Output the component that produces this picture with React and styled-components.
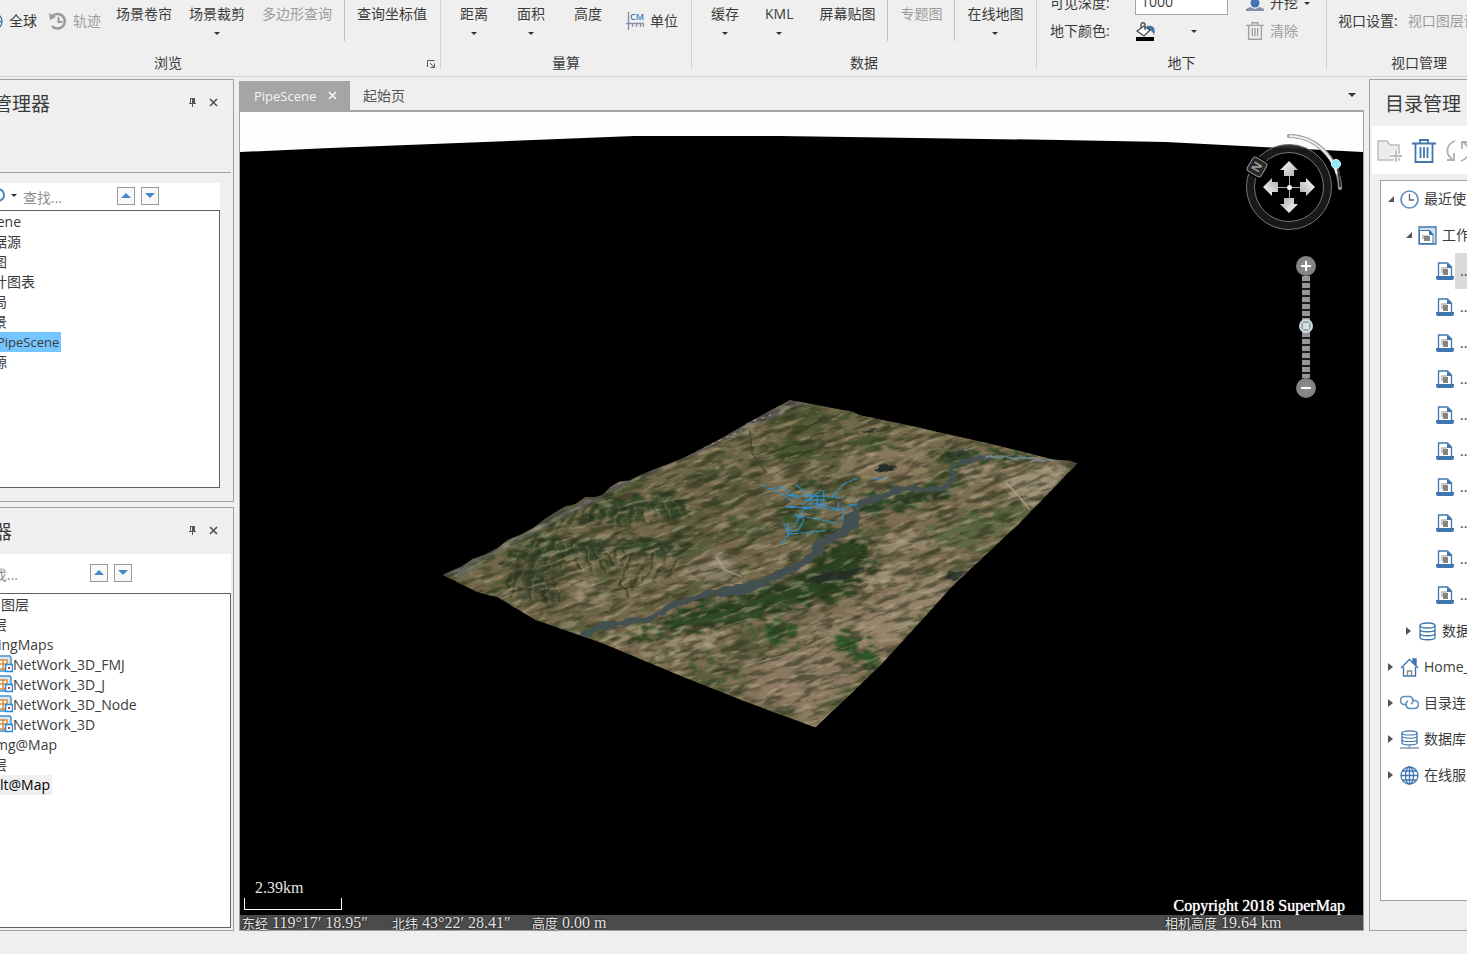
import React from 'react'
import styled, { createGlobalStyle } from 'styled-components'

const GlobalStyle = createGlobalStyle`
  * {
    box-sizing: border-box;
  }
  body {
    margin: 0;
    overflow: hidden;
    background: #efefef;
    color: #3b3b3b;
    font-family: 'Open Sans', 'Noto Sans CJK SC', sans-serif;
    font-size: 14px;
    line-height: 20px;
  }
  button, input {
    font: inherit;
    color: inherit;
    border: 0;
    padding: 0;
    background: none;
  }
  button {
    white-space: nowrap;
  }
  svg {
    display: block;
    flex: none;
  }
`

const Shell = styled.div`
  display: flex;
  flex-direction: column;
  height: 100vh;
  overflow: hidden;
`

/* ---------- ribbon ---------- */

const RibbonBar = styled.header`
  display: flex;
  flex: none;
  height: 77px;
  margin-left: -104px;
  border-bottom: 1px solid #d2d2d2;
`
const Group = styled.section`
  position: relative;
  display: flex;
  flex-direction: column;
  flex: ${p => (p.$width ? `0 0 ${p.$width}px` : '1 0 0')};
  height: 69px;
  border-right: ${p => (p.$width ? '1px solid #d2d2d2' : '0')};
`
const GroupBody = styled.div`
  display: flex;
  flex: none;
  justify-content: ${p => p.$justify || 'flex-start'};
  gap: ${p => p.$gap || 0}px;
  height: 53px;
  padding: 0 ${p => p.$right || 0}px 0 ${p => p.$left || 0}px;
`
const GroupLabel = styled.div`
  text-align: center;
  line-height: 20px;
`
const Launcher = styled.button`
  position: absolute;
  right: 4px;
  bottom: 0;
  width: 9px;
  height: 10px;
`
const BigButton = styled.button`
  display: flex;
  flex-direction: column;
  align-items: center;
  gap: 8px;
  height: 41px;
  padding-top: 4px;
  color: ${p => (p.disabled ? '#9d9d9d' : 'inherit')};
`
const SmallButton = styled.button`
  display: flex;
  align-items: center;
  gap: 6px;
  height: ${p => p.$height || 42}px;
  color: ${p => (p.disabled ? '#9d9d9d' : 'inherit')};
`
const Divider = styled.i`
  width: 1px;
  height: 41px;
  margin: 0 12px;
  background: #c0c0c0;
`
const Caret = styled.i`
  width: 0;
  height: 0;
  border: solid transparent;
  border-width: ${p => p.$size || 3}px ${p => p.$size || 3}px 0;
  border-top-color: #333;
`
const UndergroundForm = styled.div`
  display: grid;
  grid-template-columns: 85px 111px auto;
  grid-auto-rows: 28px;
  align-items: center;
  justify-content: start;
  height: 56px;
  margin-top: -11px;
  padding-left: 13px;
`
const DepthInput = styled.input`
  width: 93px;
  height: 24px;
  padding: 0 5px 4px;
  border: 1px solid #a6a6a6;
  background: #fff;
`
const ColorButton = styled.button`
  display: flex;
  align-items: center;
  justify-content: space-between;
  width: 62px;
  height: 24px;
`
const ViewportRow = styled.div`
  display: flex;
  flex: none;
  gap: 10px;
  padding-left: 11px;
  line-height: 42px;
  white-space: nowrap;
  overflow: hidden;
  height: 53px;

  span {
    color: #9d9d9d;
  }
`
const ViewportLabel = styled(GroupLabel)`
  padding-left: 64px;
  text-align: left;
`

/* ---------- work area ---------- */

const Workspace = styled.main`
  flex: 1;
  min-height: 0;
  display: grid;
  grid-template-columns: 294px minmax(0, 1fr) 98px;
  gap: 5px;
  margin-left: -60px;
  padding-top: 2px;
`
const LeftColumn = styled.aside`
  display: grid;
  grid-template-rows: 423fr 424fr;
  gap: 5px;
  min-height: 0;
`
const Panel = styled.section`
  display: flex;
  flex-direction: column;
  min-height: 0;
  min-width: 0;
  overflow: hidden;
  border: 1px solid #a0a0a0;
`
const PanelHead = styled.div`
  display: flex;
  align-items: center;
  flex: none;
  height: 46px;
  padding: 2px 15px 0 ${p => p.$left}px;

  h2 {
    flex: 1;
    margin: 0;
    font-size: 19px;
    line-height: 28px;
    font-weight: 400;
    white-space: nowrap;
  }
`
const HeadButton = styled.button`
  display: grid;
  place-items: center;
  width: 10px;
  height: 10px;
  margin: 0 0 4px 11px;
`
const PanelGap = styled.div`
  flex: none;
  height: 47px;
  margin-right: 2px;
  border-bottom: 1px solid #a0a0a0;
`
const SearchBar = styled.div`
  display: flex;
  align-items: center;
  flex: none;
  gap: 6px;
  height: ${p => p.$height}px;
  margin: ${p => p.$top}px ${p => p.$side}px 0 0;
  padding: 0 0 2px ${p => p.$left}px;
  background: #fff;

  input {
    width: ${p => p.$field}px;
    height: 20px;
    margin-top: 4px;
    outline: 0;
  }
  input::placeholder {
    color: #8f8f8f;
    opacity: 1;
  }
`
const FindButton = styled.button`
  display: grid;
  place-items: center;
  width: 18px;
  height: 18px;
  border: 1px solid #9a9a9a;
  background: #f8f8f8;
`
const TreeBox = styled.ul`
  flex: 1;
  min-height: 0;
  margin: 0 ${p => p.$side}px ${p => p.$bottom}px 0;
  padding: 1px 0 0;
  list-style: none;
  border: 1px solid #606060;
  border-left: 0;
  background: #fff;
`
const TreeRow = styled.li`
  display: flex;
  height: 20px;
  padding-left: ${p => 60 + p.$start}px;
  white-space: nowrap;

  span {
    padding-right: 2px;
    font-size: ${p => (p.$scene ? 13 : 14)}px;
    background: ${p => p.$mark || 'transparent'};
    color: ${p => (p.$strong ? '#000' : 'inherit')};
  }
`

/* ---------- scene ---------- */

const Viewer = styled.section`
  display: flex;
  flex-direction: column;
  min-width: 0;
  min-height: 0;
`
const TabStrip = styled.div`
  display: flex;
  align-items: center;
  flex: none;
  height: 33px;
  padding: 2px 6px 2px 0;
  border-bottom: 2px solid #a5a5a5;
`
const Tab = styled.button`
  display: flex;
  align-items: center;
  justify-content: space-between;
  align-self: stretch;
  width: ${p => (p.$active ? '111px' : 'auto')};
  margin-bottom: -2px;
  padding: 0 13px 0 ${p => (p.$active ? 15 : 13)}px;
  font-size: ${p => (p.$active ? 13 : 14)}px;
  background: ${p => (p.$active ? '#a5a5a5' : 'none')};
  color: ${p => (p.$active ? '#f4f4f4' : '#555')};
`
const TabMenu = styled.button`
  display: grid;
  place-items: center;
  width: 12px;
  height: 12px;
  margin-left: auto;
`
const Canvas = styled.div`
  position: relative;
  flex: 1;
  min-height: 0;
  display: flex;
  flex-direction: column;
  border: 1px solid #a0a0a0;
  border-top: 0;
  background: #000;
`
const Scene = styled.svg`
  flex: 1;
  width: 100%;
  min-height: 0;
`
const Compass = styled.svg`
  position: absolute;
  top: 18px;
  right: 13px;
`
const ZoomBar = styled.div`
  position: absolute;
  top: 144px;
  right: 47px;
  display: flex;
  flex-direction: column;
  align-items: center;
  width: 20px;
`
const ZoomButton = styled.button`
  display: grid;
  place-items: center;
  width: 20px;
  height: 20px;
  border-radius: 50%;
  background: radial-gradient(#8f8f8f, #7b7b7b);
`
const ZoomRange = styled.input`
  appearance: none;
  writing-mode: vertical-lr;
  direction: rtl;
  width: 14px;
  height: 102px;
  margin: 0;
  background: repeating-linear-gradient(#969696 0 5px, #1c1c1c 5px 7px) center / 8px 100% no-repeat;

  &::-webkit-slider-thumb {
    appearance: none;
    width: 14px;
    height: 14px;
    border: 2px solid #cfdadd;
    border-radius: 50%;
    background: linear-gradient(#d3dfe2, #d3dfe2) center / 6px 6px no-repeat #94a5ab;
  }
`
const ScaleBar = styled.div`
  position: absolute;
  left: 4px;
  bottom: 20px;
  width: 98px;
  height: 30px;
  padding-left: 11px;
  color: #e6e6e6;
  font: 16px/16px 'Liberation Serif', 'Noto Sans CJK SC', serif;

  &::after {
    content: '';
    position: absolute;
    left: 0;
    right: 0;
    bottom: 0;
    height: 11px;
    border: 1px solid #fff;
    border-top: 0;
  }
`
const Copyright = styled.div`
  position: absolute;
  right: 18px;
  bottom: 14px;
  color: #fff;
  font: 16px/20px 'Liberation Serif', serif;
  text-shadow: 0 0 1px #fff;
`
const CoordBar = styled.div`
  display: grid;
  grid-template-columns: 150px 140px 1fr 198px;
  flex: none;
  height: 15px;
  padding-left: 2px;
  background: #4b4b4b;
  color: #e2e2e2;
  font: 16px/15px 'Liberation Serif', 'Noto Sans CJK SC', serif;
  text-shadow: 0 0 2px #000;
  white-space: pre;

  b {
    font-weight: 400;
    font-size: 13px;
  }
`

/* ---------- catalog ---------- */

const CatalogPanel = styled(Panel)`
  border-right: 0;
`
const CatalogTools = styled.div`
  display: flex;
  align-items: center;
  flex: none;
  gap: 10px;
  height: 48px;
  margin-left: 2px;
  padding: 2px 0 0 5px;
  background: #fff;
`
const CatalogTree = styled.ul`
  flex: 1;
  min-height: 0;
  margin: 6px 0 29px 10px;
  padding: 0;
  list-style: none;
  overflow: hidden;
  border: 1px solid #a0a0a0;
  border-right: 0;
  background: #fff;
`
const CatalogRow = styled.li`
  display: flex;
  align-items: center;
  height: 36px;
  padding-left: ${p => 7 + p.$depth * 18}px;
  white-space: nowrap;

  span {
    align-self: stretch;
    flex: 1 0 auto;
    padding-left: 5px;
    line-height: 36px;
    background: ${p => (p.$selected ? '#dadada' : 'none')};
  }
`
const Twisty = styled.i`
  flex: none;
  width: 12px;
  display: flex;
  visibility: ${p => (p.$leaf ? 'hidden' : 'visible')};

  &::before {
    content: '';
    border-style: solid;
    border-width: ${p => (p.$open ? '0 0 6px 6px' : '4px 0 4px 5px')};
    border-color: ${p => (p.$open ? 'transparent transparent #555' : 'transparent transparent transparent #555')};
  }
`
const StatusBar = styled.footer`
  flex: none;
  height: 23px;
`

/* ---------- icons ---------- */

const blue = '#3f76b0'

const CloseIcon = ({ color = '#555' }) => (
  <svg width="9" height="9" viewBox="0 0 9 9">
    <path d="M1 1l7 7M8 1L1 8" stroke={color} strokeWidth="1.7" />
  </svg>
)

const PinIcon = () => (
  <svg width="7" height="9" viewBox="0 0 7 9">
    <path d="M1 0h5v5h1v1H4v3H3V6H0V5h1z" fill="#555" />
    <path d="M2 1h1v4H2z" fill="#efefef" />
  </svg>
)

const LauncherIcon = () => (
  <svg width="8" height="8" viewBox="0 0 8 8" fill="none" stroke="#555">
    <path d="M.5 7V.5H7.500" />
    <path d="M3 3l4 4M7.500 3.500v4h-4" />
  </svg>
)

const HistoryIcon = () => (
  <svg width="18" height="18" viewBox="0 0 18 18" fill="none" stroke="#9a9a9a">
    <path d="M3 4.500A7.300 7.300 0 1 1 3 14" strokeWidth="2.600" />
    <path d="M0 1l1 7 6-3z" fill="#9a9a9a" stroke="none" />
    <path d="M9.500 5v5h4" strokeWidth="2" />
  </svg>
)

const GlobeIcon = () => (
  <svg width="19" height="19" viewBox="0 0 19 19" fill="none" stroke={blue} strokeWidth="1.300">
    <circle cx="9.500" cy="9.500" r="8.500" />
    <ellipse cx="9.500" cy="9.500" rx="4" ry="8.500" />
    <path d="M9.500 1v17M1 9.500h17M2.500 5h14M2.500 14h14" />
  </svg>
)

const UnitIcon = () => (
  <svg width="18" height="18" viewBox="0 0 18 18">
    <path d="M2.500 0v18M0 11.500h18M6.500 11v4M10.500 11v4M14.500 11v4M17.500 11v4" stroke="#8590a5" strokeWidth="1.300" />
    <text x="4" y="8" fontSize="9" fontWeight="600" fill={blue}>CM</text>
  </svg>
)

const BucketIcon = () => (
  <svg width="20" height="19" viewBox="0 0 20 19">
    <path d="M12 4c7-1 9 3 7 9-1-3-3-5-7-6z" fill={blue} />
    <path d="M9 4L2 9l7 5 6-6z" fill="#fff" stroke="#444" strokeWidth="1.200" />
    <path d="M6 6V3c0-3 4-3 4 0v5" fill="none" stroke="#555" strokeWidth="1.400" />
    <path d="M1 15h18v4H1z" fill="#000" />
  </svg>
)

const DigIcon = () => (
  <svg width="18" height="18" viewBox="0 0 18 18">
    <circle cx="9" cy="9" r="4.500" fill={blue} />
    <path d="M0 17v-2l4-2 5 2 5-2 4 2v2z" fill="#8590a5" />
  </svg>
)

const TrashIcon = ({ color, size = 18 }) => (
  <svg width={size} height={size} viewBox="0 0 24 24" fill="none" stroke={color} strokeWidth="1.800">
    <path d="M0 4.500h24M8 4V1h8v3M3.500 5v18h17V5M8.500 8v11M12 8v11M15.500 8v11" />
  </svg>
)

const FolderAddIcon = () => (
  <svg width="25" height="24" viewBox="0 0 25 24" fill="none" stroke="#bcbcbc">
    <path d="M1 2h9l3 4h9v15H1z" fill="#ececec" strokeWidth="1.500" />
    <path d="M19 11v12M13 17h12" stroke="#fff" strokeWidth="4" />
    <path d="M19 11v12M13 17h12" strokeWidth="1.800" />
  </svg>
)

const RefreshIcon = () => (
  <svg width="24" height="24" viewBox="0 0 24 24" fill="none" stroke="#b0b0b0" strokeWidth="1.800">
    <path d="M9 2C0 5-1 15 6 20M1 21h7v-7M15 22c9-3 10-13 3-18M23 3h-7v7" />
  </svg>
)

const ClockIcon = () => (
  <svg width="19" height="19" viewBox="0 0 19 19" fill="none">
    <circle cx="9.500" cy="9.500" r="8.500" stroke="#5f8fbf" strokeWidth="1.700" />
    <path d="M9.500 4v6h4.500" stroke="#666" strokeWidth="1.300" />
  </svg>
)

const WorkspaceIcon = () => (
  <svg width="19" height="19" viewBox="0 0 19 19" fill="none" stroke={blue}>
    <path d="M1 1h17v17H1z" fill="#d3e0ee" strokeWidth="1.300" />
    <path d="M1.500 4.500h10.500l3 4v9H1.500z" fill="#fff" />
    <path d="M11.500 4.500v4h3.500z" fill={blue} />
    <path d="M4 9h7v4H4z" fill="#c4c4c4" stroke="none" />
    <path d="M6 10h6v5H6z" fill="#858585" stroke="none" />
  </svg>
)

const FileIcon = () => (
  <svg width="19" height="19" viewBox="0 0 19 19">
    <path d="M2.500 1h9l4 4v10h-13z" fill="#fff" stroke={blue} strokeWidth="1.300" />
    <path d="M11 1v5h5z" fill={blue} />
    <path d="M5 5h6v6H5z" fill="#c8c8c8" />
    <path d="M7 7h5v6H7z" fill="#858585" />
    <path d="M0 14h18v2l-1 2H1l-1-2z" fill={blue} />
  </svg>
)

const DatabaseIcon = ({ served }) => (
  <svg width="19" height="19" viewBox="0 0 19 19" fill="none" stroke={blue} strokeWidth="1.300">
    <g transform={served ? 'scale(1 .84)' : undefined}>
      <ellipse cx="9.500" cy="3.500" rx="7.500" ry="2.500" />
      <path d="M2 3.500v12c0 3 15 3 15 0v-12M2 7.500c0 3 15 3 15 0M2 11.500c0 3 15 3 15 0" />
    </g>
    {served && <path d="M0 18h19M9.500 15v3" stroke="#8d99ab" strokeWidth="1.500" />}
  </svg>
)

const HomeIcon = () => (
  <svg width="19" height="19" viewBox="0 0 19 19" fill="none" stroke={blue} strokeWidth="1.400">
    <path d="M1 10l8.500-8.500L18 10M3.500 9v9h12V9" />
    <path d="M13 1h3v6l-3-3z" fill={blue} />
    <path d="M7.500 18v-5h4v5" stroke="#888" />
  </svg>
)

const LinkIcon = () => (
  <svg width="19" height="19" viewBox="0 0 19 19" fill="none" stroke="#5f8fbf" strokeWidth="1.600">
    <path d="M7 10.500H4.500a3.700 3.700 0 0 1 0-8H9a4 4 0 0 1 2 7.500" />
    <path d="M12 6.500h2.500a3.700 3.700 0 0 1 0 8H10a4 4 0 0 1-2-7.500" />
  </svg>
)

const LayerIcon = () => (
  <svg width="18" height="18" viewBox="0 0 18 18">
    <path d="M1 1h14l1 2v13H1z" fill="#d6e8f7" stroke="#4a90c8" strokeWidth="1.500" />
    <path d="M3 5h9v9H3zM3 9h9M8 5v9" fill="#fff" stroke="#e08a35" strokeWidth="1.500" />
    <path d="M10.500 9.500h7v7h-7z" fill="#fff" stroke="#1e8ae0" strokeWidth="1.500" />
    <path d="M13 12h2v2h-2z" fill="#c33" />
  </svg>
)

const UpDown = () => (
  <>
    <FindButton aria-label="上一个">
      <svg width="10" height="5" viewBox="0 0 10 5"><path d="M0 5l5-5 5 5z" fill="#4486c6" /></svg>
    </FindButton>
    <FindButton aria-label="下一个">
      <svg width="10" height="5" viewBox="0 0 10 5"><path d="M0 0l5 5 5-5z" fill="#4486c6" /></svg>
    </FindButton>
  </>
)

/* ---------- terrain ---------- */

const outline =
  'M30 555L75 530L100 508L130 495L160 475L185 450L215 435L245 415L275 385L295 370L320 350L345 342L370 320L390 322L410 315L430 290L450 275L475 272L500 255L530 240L600 205L640 180L700 140L760 95L855 30L1005 65L1020 75L1135 105L1345 165L1480 208L1520 212L1538 220L1400 400L1240 590L1075 820L916 1013L750 935L600 860L400 755L250 690L185 640L160 622L110 605Z'

const fields = [
  ['#34462a', 'M340 370L420 320L560 310L620 345L590 375L520 360L480 385L380 395Z'],
  ['#36482b', 'M200 470L270 430L400 445L560 440L640 470L560 490L470 475L380 505L320 490L250 520L180 500Z'],
  ['#38432f', 'M180 540L260 520L300 570L280 640L210 600Z'],
  ['#4a5133', 'M600 250L740 230L800 260L700 275L590 270Z'],
  ['#46522f', 'M760 170L860 140L930 150L900 200L800 210Z'],
  ['#42532c', 'M960 130L1060 130L1120 165L1020 175Z'],
  ['#4b5431', 'M760 70L880 45L1000 75L960 110L820 105Z'],
  ['#2b4826', 'M1200 200L1290 175L1450 200L1410 212L1300 205L1220 220Z'],
  ['#2f4a27', 'M870 280L950 275L945 320L880 310Z'],
  ['#394f2d', 'M820 350L890 345L960 420L860 430Z'],
  ['#2a4526', 'M1010 330L1100 300L1240 270L1250 305L1100 350L1020 370Z'],
  ['#25401e', 'M930 460L1030 430L1040 510L1000 600L890 640L780 620L870 560L910 500Z'],
  ['#2b4625', 'M600 650L760 590L860 570L920 610L760 690L580 720L430 770L480 730L560 690Z'],
  ['#5e6843', 'M1190 400L1320 370L1440 340L1370 420L1260 480L1180 450Z'],
  ['#50603a', 'M1250 370L1420 365L1400 385L1280 390Z'],
  ['#265024', 'M950 725L1010 735L1030 770L1070 810L1040 850L1000 790L940 750Z'],
  ['#2f5528', 'M780 700L860 690L870 730L820 760L770 730Z'],
  ['#3a572f', 'M670 880L720 865L735 880L690 897Z'],
  ['#455a35', 'M640 800L700 770L690 810L640 860Z'],
  ['#4c5a38', 'M700 390L800 380L800 420L720 425Z']
]

const barren = [
  ['#a3947a', 'M330 560L400 570L430 630L360 610Z'],
  ['#a59678', 'M380 745L500 698L560 700L470 740L400 765Z'],
  ['#a39478', 'M500 790L620 730L720 710L640 760L520 810Z'],
  ['#a59678', 'M1000 590L1060 530L1150 500L1100 560L1010 620Z'],
  ['#a89980', 'M1330 260L1520 215L1530 222L1420 350L1380 300Z'],
  ['#a8967e', 'M1250 250L1290 210L1310 240L1280 280Z'],
  ['#948672', 'M600 560L680 480L740 530L680 590Z'],
  ['#9d8e74', 'M1020 450L1150 420L1200 470L1120 490Z'],
  ['#9b8870', 'M1000 660L1200 540L1250 570L1120 740L1000 800L900 700Z'],
  ['#927e68', 'M760 800L950 760L1000 860L900 980L760 920Z'],
  ['#8f7c62', 'M1000 180L1180 150L1200 220L1100 280L960 260Z'],
  ['#8c795f', 'M660 210L760 200L740 220L640 235Z']
]

/* [x, y, lean, length] of every valley in the hills */
const gullies = [
  [300, 380, -20, 40], [325, 372, -26, 44], [350, 350, -20, 50], [372, 345, -16, 56], [394, 345, -14, 58],
  [416, 340, -10, 60], [438, 345, -12, 60], [460, 345, -14, 62], [482, 340, -8, 60], [504, 342, 4, 55],
  [526, 335, 12, 52], [548, 332, 18, 50], [572, 328, 22, 48], [596, 334, 22, 40],
  [205, 480, -36, 44], [228, 460, -44, 66], [250, 445, -46, 76], [272, 445, -34, 84], [294, 450, -22, 90],
  [316, 450, -4, 84], [338, 455, 16, 84], [360, 460, 26, 86], [384, 468, 30, 74], [410, 470, 32, 62],
  [436, 470, 10, 56], [462, 472, -8, 54], [490, 474, -24, 58], [518, 470, 14, 40], [546, 462, 20, 36],
  [190, 545, -10, 60], [214, 540, -22, 80], [238, 550, -4, 82], [262, 555, 14, 76], [286, 560, 26, 70],
  [470, 530, -20, 60], [500, 530, -20, 66], [530, 520, -26, 60], [560, 510, -30, 64], [590, 505, -30, 60], [450, 570, 22, 50]
]

const pipes =
  'M785 285L800 290M803 297L835 292L860 312L878 320M815 298l50 38M868 284l52 50M882 345l48-45M880 318h52l20 4h30M845 352h70l50 8h20M850 347l50 10M870 378l50 8 50 16M855 432l85-10M835 465l18-34-14-34M868 370l20 20-14 34M892 350l-28 62M1008 342l-24 10-4 40M955 320l30-40 30-15M1050 266h20l16-6M935 300v50M905 310v50M920 318v36M970 335v28M915 340l60 18M850 315l30 10M845 312l20 6M890 330h50M900 342h40M995 345h20M850 400v40M850 420l22 4'

const Terrain = () => (
  <g transform="translate(430 390) scale(.4209 .3333)">
    <defs>
      <linearGradient id="soil" x1="0" y1="0" x2="1" y2="1">
        <stop offset="0" stopColor="#66603f" />
        <stop offset=".5" stopColor="#7a6c50" />
        <stop offset="1" stopColor="#8d7a62" />
      </linearGradient>
      <clipPath id="tile"><path d={outline} /></clipPath>
      <filter id="patch" x="-20%" y="-20%" width="140%" height="140%" colorInterpolationFilters="sRGB">
        <feTurbulence type="fractalNoise" baseFrequency=".03 .06" numOctaves="5" seed="4" result="n" />
        <feDisplacementMap in="SourceGraphic" in2="n" scale="110" xChannelSelector="R" yChannelSelector="G" />
        <feGaussianBlur stdDeviation="2.500" />
      </filter>
      <filter id="shore" colorInterpolationFilters="sRGB">
        <feTurbulence type="fractalNoise" baseFrequency=".04" numOctaves="3" seed="9" result="n" />
        <feDisplacementMap in="SourceGraphic" in2="n" scale="22" xChannelSelector="R" yChannelSelector="G" />
      </filter>
      <filter id="dark" x="0" y="0" width="100%" height="100%" colorInterpolationFilters="sRGB">
        <feTurbulence type="fractalNoise" baseFrequency=".018 .06" numOctaves="5" seed="12" />
        <feColorMatrix values="0 0 0 0 .14  0 0 0 0 .17  0 0 0 0 .09  5 0 0 0 -2.300" />
      </filter>
      <filter id="light" x="0" y="0" width="100%" height="100%" colorInterpolationFilters="sRGB">
        <feTurbulence type="fractalNoise" baseFrequency=".022 .07" numOctaves="5" seed="31" />
        <feColorMatrix values="0 0 0 0 .76  0 0 0 0 .7  0 0 0 0 .58  0 5 0 0 -2.700" />
      </filter>
      <filter id="moss" x="0" y="0" width="100%" height="100%" colorInterpolationFilters="sRGB">
        <feTurbulence type="fractalNoise" baseFrequency=".008 .02" numOctaves="6" seed="7" />
        <feColorMatrix values="0 0 0 0 .24  0 0 0 0 .31  0 0 0 0 .16  0 0 7 0 -3.500" />
      </filter>
    </defs>
    <g clipPath="url(#tile)">
      <path d={outline} fill="url(#soil)" />
      <g transform="rotate(-24 784 525)">
        <rect x="-200" y="-300" width="2000" height="1700" filter="url(#moss)" opacity=".5" />
      </g>
      <g filter="url(#patch)" transform="translate(5 5)">
        {barren.map(([color, d]) => <path key={d} d={d} fill={color} opacity=".8" />)}
        {fields.map(([color, d]) => <path key={d} d={d} fill={color} opacity=".92" />)}
      </g>
      <g filter="url(#shore)" fill="none" strokeLinecap="round">
        {gullies.map(([x, y, lean, length]) => (
          <React.Fragment key={`${x}-${y}`}>
            <path d={`M${x} ${y}l${lean} ${length}`} stroke="#2d3923" strokeWidth="6" opacity=".6" />
            <path d={`M${x + 9} ${y + 8}l${lean} ${length}`} stroke="#8f8062" strokeWidth="4" opacity=".45" />
          </React.Fragment>
        ))}
      </g>
      <path
        d="M30 555L245 415L450 275L600 205L855 30L890 38L760 115L640 190L530 248L440 300L320 380L210 450L130 515L70 560Z"
        fill="#5b5853"
      />
      <path d="M30 555L30 400L300 300L340 365L210 455L130 515L70 565Z" fill="#646858" />
      <path d="M560 215L640 178L740 122M750 100l60-25" stroke="#c9b2a4" strokeWidth="3" strokeDasharray="8 12" fill="none" />
      <g transform="rotate(-24 784 525)">
        <rect x="-200" y="-300" width="2000" height="1700" filter="url(#dark)" opacity=".5" />
        <rect x="-200" y="-300" width="2000" height="1700" filter="url(#light)" opacity=".42" />
      </g>
      <g filter="url(#shore)" fill="none" stroke="#435052" strokeLinejoin="round">
        <path d="M360 740L400 710L530 685L570 650L650 615L760 590L820 560L880 525" strokeWidth="17" />
        <path d="M680 612L750 595L790 575" strokeWidth="28" />
        <path d="M870 530L915 490L930 455L985 425L1005 370" strokeWidth="22" />
        <path d="M1005 420L1010 350L1060 325L1120 295" strokeWidth="17" />
        <path d="M1120 295L1215 300L1245 270L1240 230L1280 210L1330 200" strokeWidth="13" />
        <path d="M1320 200L1400 205L1480 210" strokeWidth="7" stroke="#71858b" />
      </g>
      <g filter="url(#shore)" fill="#232c27">
        <path d="M1055 238L1065 226L1082 220L1102 228L1106 236L1090 245L1065 245Z" />
        <path d="M1025 122l20-4 20 4-20 5z" />
        <path d="M885 575L930 550L1000 540L1040 532L1000 558L920 578Z" opacity=".8" />
        <path d="M1230 190L1260 182L1285 188L1270 198L1235 202Z" opacity=".7" />
        <path d="M1230 552L1262 540L1278 545L1245 575L1228 566Z" opacity=".8" />
      </g>
      <path d="M760 120L765 190L800 250" stroke="#3c4430" strokeWidth="3" fill="none" />
      <path d="M680 500L700 540L740 560M1370 280L1400 320L1425 360" stroke="#b5aa92" strokeWidth="3" fill="none" />
      <path d="M740 830L860 790L950 740" stroke="#aaa18c" strokeWidth="4" fill="none" opacity=".5" />
      <path d={pipes} fill="none" stroke="#2f96dc" strokeWidth="3" strokeDasharray="22 3 9 2" />
    </g>
  </g>
)

const arrows = [0, 90, 180, 270]

const CompassRose = () => (
  <Compass width="110" height="104" viewBox="1240 130 110 104" fill="none">
    <defs>
      <linearGradient id="steel" x1="0" y1="0" x2="1" y2="1">
        <stop offset="0" stopColor="#fff" />
        <stop offset="1" stopColor="#aaa" />
      </linearGradient>
    </defs>
    <circle cx="1289" cy="187" r="38.500" stroke="#1b1b1b" strokeOpacity=".92" strokeWidth="8" />
    <circle cx="1289" cy="187" r="42.500" stroke="#777" />
    <circle cx="1289" cy="187" r="34.500" stroke="#777" />
    <path d="M1289 136c26 0 50 22 51 52" stroke="#999" strokeWidth="4" strokeLinecap="round" />
    <path d="M1289 136c23 0 42 16 48 38" stroke="#eee" strokeWidth="2" />
    <path d="M1338 168c1 6 2 13 2 19" stroke="#333" strokeWidth="2" />
    <circle cx="1336" cy="164" r="4.500" fill="#8eeaf7" stroke="#d8faff" />
    <g transform="rotate(30 1257 167)">
      <rect x="1247" y="157" width="20" height="20" fill="#000" />
      <rect x="1249" y="159" width="16" height="16" rx="3" fill="#272727" stroke="#999" />
    </g>
    <text
      x="1257" y="171" textAnchor="middle" fontSize="12" fontWeight="700" fill="#999"
      transform="rotate(-60 1257 167)"
    >N</text>
    <path d="M1275 187.500h28M1289.500 173v28" stroke="#aaa" />
    {arrows.map(angle => (
      <path
        key={angle}
        d="M1289 161l9 9h-4v6h-10v-6h-4z"
        fill="url(#steel)"
        transform={`rotate(${angle} 1289 187)`}
      />
    ))}
    <circle cx="1289.500" cy="187.500" r="2.500" fill="#fff" />
  </Compass>
)

/* ---------- data ---------- */

const workspaceTree = [
  { text: 'cene', start: -11 },
  { text: '据源', start: -8 },
  { text: '图', start: -8 },
  { text: '计图表', start: -8 },
  { text: '局', start: -8 },
  { text: '景', start: -8 },
  { text: 'PipeScene', start: -4, mark: '#75c6ff', scene: true },
  { text: '源', start: -8 }
]

const layerTree = [
  { text: '图层', start: 0 },
  { text: '层', start: -8 },
  { text: 'ingMaps', start: -3 },
  { text: 'NetWork_3D_FMJ', start: -6, icon: true },
  { text: 'NetWork_3D_J', start: -6, icon: true },
  { text: 'NetWork_3D_Node', start: -6, icon: true },
  { text: 'NetWork_3D', start: -6, icon: true },
  { text: 'mg@Map', start: -6 },
  { text: '层', start: -8 },
  { text: 'lt@Map', start: -1, mark: '#efefef', strong: true }
]

const recentFiles = Array.from({ length: 10 }, (_, i) => ({
  text: '..\\', depth: 2, icon: <FileIcon />, leaf: true, selected: i === 0
}))

const catalog = [
  { text: '最近使用', depth: 0, icon: <ClockIcon />, open: true },
  { text: '工作', depth: 1, icon: <WorkspaceIcon />, open: true },
  ...recentFiles,
  { text: '数据', depth: 1, icon: <DatabaseIcon /> },
  { text: 'Home_', depth: 0, icon: <HomeIcon /> },
  { text: '目录连', depth: 0, icon: <LinkIcon /> },
  { text: '数据库', depth: 0, icon: <DatabaseIcon served /> },
  { text: '在线服', depth: 0, icon: <GlobeIcon /> }
]

const Big = ({ label, menu, disabled }) => (
  <BigButton disabled={disabled}>
    {label}
    {menu && <Caret />}
  </BigButton>
)

const Ribbon = () => (
  <RibbonBar>
    <Group $width={545}>
      <GroupBody $justify="flex-end" $right={13}>
        <GroupBody $gap={12} $right={15}>
          <SmallButton><GlobeIcon />全球</SmallButton>
          <SmallButton disabled><HistoryIcon />轨迹</SmallButton>
        </GroupBody>
        <GroupBody $gap={17}>
          <Big label="场景卷帘" />
          <Big label="场景裁剪" menu />
          <Big label="多边形查询" disabled />
        </GroupBody>
        <Divider />
        <Big label="查询坐标值" />
      </GroupBody>
      <GroupLabel>浏览</GroupLabel>
      <Launcher aria-label="浏览设置"><LauncherIcon /></Launcher>
    </Group>
    <Group $width={251}>
      <GroupBody $left={19} $gap={24}>
        <GroupBody $gap={29}>
          <Big label="距离" menu />
          <Big label="面积" menu />
          <Big label="高度" />
        </GroupBody>
        <SmallButton><UnitIcon />单位</SmallButton>
      </GroupBody>
      <GroupLabel>量算</GroupLabel>
    </Group>
    <Group $width={345}>
      <GroupBody $left={19}>
        <GroupBody $gap={26}>
          <Big label="缓存" menu />
          <Big label="KML" menu />
          <Big label="屏幕贴图" />
        </GroupBody>
        <Divider />
        <Big label="专题图" disabled />
        <Divider />
        <Big label="在线地图" menu />
      </GroupBody>
      <GroupLabel>数据</GroupLabel>
    </Group>
    <Group $width={290}>
      <GroupBody>
        <UndergroundForm>
          <label htmlFor="depth">可见深度:</label>
          <DepthInput id="depth" defaultValue="1000" />
          <SmallButton $height={24}><DigIcon />开挖 <Caret /></SmallButton>
          <label htmlFor="ground">地下颜色:</label>
          <ColorButton id="ground"><BucketIcon /><Caret /></ColorButton>
          <SmallButton $height={24} disabled><TrashIcon color="#a0a0a0" />清除</SmallButton>
        </UndergroundForm>
      </GroupBody>
      <GroupLabel>地下</GroupLabel>
    </Group>
    <Group>
      <ViewportRow>视口设置:<span>视口图层设</span></ViewportRow>
      <ViewportLabel>视口管理</ViewportLabel>
    </Group>
  </RibbonBar>
)

const Tree = ({ rows, side, bottom }) => (
  <TreeBox $side={side} $bottom={bottom}>
    {rows.map((row, i) => (
      <TreeRow key={i} $start={row.start} $mark={row.mark} $strong={row.strong} $scene={row.scene}>
        {row.icon && <LayerIcon />}
        <span>{row.text}</span>
      </TreeRow>
    ))}
  </TreeBox>
)

const PanelButtons = () => (
  <>
    <HeadButton aria-label="固定"><PinIcon /></HeadButton>
    <HeadButton aria-label="关闭"><CloseIcon /></HeadButton>
  </>
)

const App = () => {
  return (
    <Shell>
      <GlobalStyle />
      <Ribbon />
      <Workspace>
        <LeftColumn>
          <Panel>
            <PanelHead $left={52}>
              <h2>管理器</h2>
              <PanelButtons />
            </PanelHead>
            <PanelGap />
            <SearchBar $height={27} $top={10} $side={13} $left={46} $field={88}>
              <svg width="18" height="18" viewBox="0 0 18 18" fill="none">
                <circle cx="11" cy="8" r="6" stroke="#4a8ac4" strokeWidth="2" />
              </svg>
              <Caret />
              <input aria-label="查找" placeholder="查找..." />
              <UpDown />
            </SearchBar>
            <Tree rows={workspaceTree} side={13} bottom={13} />
          </Panel>
          <Panel>
            <PanelHead $left={52}>
              <h2>器</h2>
              <PanelButtons />
            </PanelHead>
            <SearchBar $height={39} $top={0} $side={2} $left={52} $field={91}>
              <input aria-label="查找图层" placeholder="找..." />
              <UpDown />
            </SearchBar>
            <Tree rows={layerTree} side={2} bottom={2} />
          </Panel>
        </LeftColumn>
        <Viewer>
          <TabStrip>
            <Tab $active>PipeScene<CloseIcon color="#f4f4f4" /></Tab>
            <Tab>起始页</Tab>
            <TabMenu aria-label="窗口列表"><Caret $size={4} /></TabMenu>
          </TabStrip>
          <Canvas>
            <Scene viewBox="240 112 1123 803" preserveAspectRatio="xMidYMid slice">
              <path d="M240 112H1363V152L1166 142L1060 140L780 136H634L330 148L240 152Z" fill="#fdfeff" />
              <Terrain />
            </Scene>
            <CompassRose />
            <ZoomBar>
              <ZoomButton aria-label="放大">
                <svg width="10" height="10" viewBox="0 0 10 10"><path d="M5 0v10M0 5h10" stroke="#fff" strokeWidth="2" /></svg>
              </ZoomButton>
              <ZoomRange type="range" aria-label="缩放" defaultValue="51" />
              <ZoomButton aria-label="缩小">
                <svg width="10" height="10" viewBox="0 0 10 10"><path d="M0 5h10" stroke="#fff" strokeWidth="2" /></svg>
              </ZoomButton>
            </ZoomBar>
            <ScaleBar>2.39km</ScaleBar>
            <Copyright>Copyright 2018 SuperMap</Copyright>
            <CoordBar>
              <span><b>东经</b> 119°17′ 18.95″</span>
              <span><b>北纬</b> 43°22′ 28.41″</span>
              <span><b>高度</b> 0.00 m</span>
              <span><b>相机高度</b> 19.64 km</span>
            </CoordBar>
          </Canvas>
        </Viewer>
        <CatalogPanel>
          <PanelHead $left={15}>
            <h2>目录管理</h2>
          </PanelHead>
          <CatalogTools>
            <button aria-label="添加文件夹"><FolderAddIcon /></button>
            <button aria-label="删除"><TrashIcon color={blue} size={24} /></button>
            <button aria-label="刷新"><RefreshIcon /></button>
          </CatalogTools>
          <CatalogTree>
            {catalog.map((row, i) => (
              <CatalogRow key={i} $depth={row.depth} $selected={row.selected}>
                <Twisty $open={row.open} $leaf={row.leaf} />
                {row.icon}
                <span>{row.text}</span>
              </CatalogRow>
            ))}
          </CatalogTree>
        </CatalogPanel>
      </Workspace>
      <StatusBar />
    </Shell>
  )
}

export default App
